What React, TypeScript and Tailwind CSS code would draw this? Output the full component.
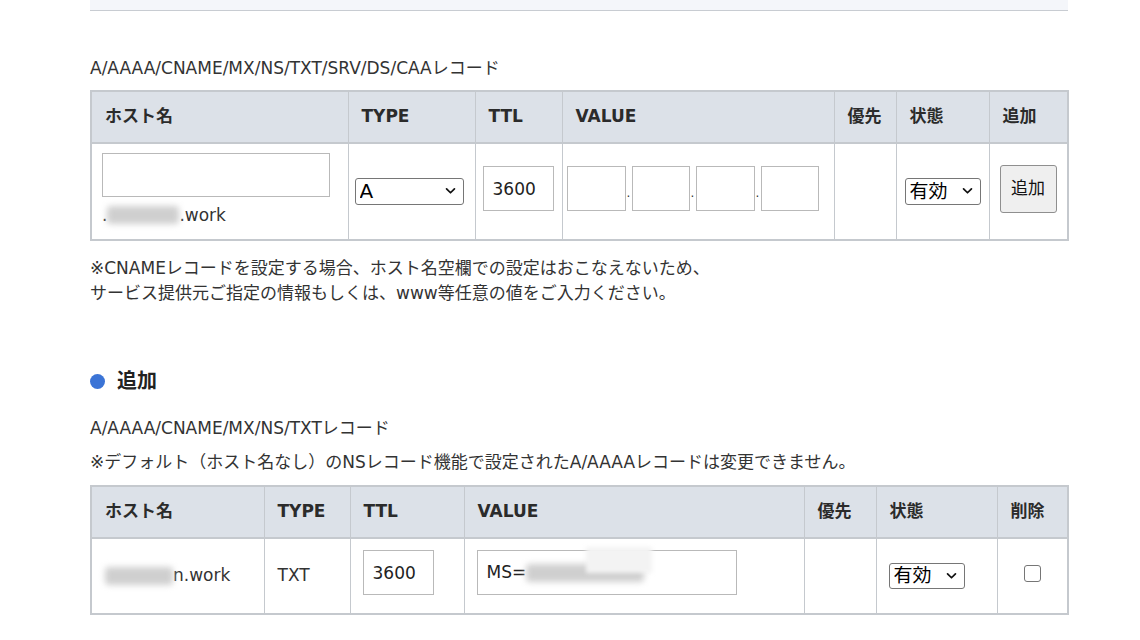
import React from 'react';

const font = "font-['DejaVu_Sans','Noto_Sans_CJK_JP',sans-serif]";

function Chevron({ className = '' }: { className?: string }) {
  return (
    <svg viewBox="0 0 12 8" className={className} fill="none" stroke="#111" strokeWidth="2" strokeLinecap="round" strokeLinejoin="round">
      <path d="M1.5 1.5 6 6l4.5-4.5" />
    </svg>
  );
}

function FakeSelect({ value, className }: { value: string; className: string }) {
  return (
    <div className={`relative inline-flex items-center rounded-[3px] border border-[#767676] bg-white leading-none text-black ${className}`}>
      <select className="h-full w-full appearance-none bg-transparent pl-[4px] outline-none" defaultValue={value}>
        <option>{value}</option>
      </select>
      <Chevron className="pointer-events-none absolute right-[7px] top-1/2 h-[7px] w-[11px] -translate-y-1/2" />
    </div>
  );
}

function Blur({ className }: { className: string }) {
  return <span className={`inline-block rounded-sm bg-[#cfcfcf] blur-[3px] align-middle ${className}`} />;
}

const th = 'border border-[#c5c9ce] border-b-2 px-[13px] text-left align-middle font-bold text-[#2b2b2b]';
const td = 'border border-[#c5c9ce] align-middle';

export default function App() {
  return (
    <div className={`min-h-[640px] w-[1140px] bg-white text-[17px] text-[#333] ${font}`}>
      <div className="ml-[90px] w-[978px]">
        <div className="h-[11px] border-b border-[#c8ccd2] bg-[#f4f6fa]" />

        <p className="mt-[45px] leading-[24px]">A/AAAA/CNAME/MX/NS/TXT/SRV/DS/CAAレコード</p>

        <table className="mt-[10px] w-[977px] table-fixed border-collapse border-2 border-[#c5c9ce]">
          <colgroup>
            <col className="w-[257px]" />
            <col className="w-[127px]" />
            <col className="w-[87px]" />
            <col className="w-[272px]" />
            <col className="w-[62px]" />
            <col className="w-[93px]" />
            <col className="w-[79px]" />
          </colgroup>
          <thead>
            <tr className="h-[52px] bg-[#dce1e8]">
              <th className={th}>ホスト名</th>
              <th className={th}>TYPE</th>
              <th className={th}>TTL</th>
              <th className={th}>VALUE</th>
              <th className={`${th} px-[10px]`}>優先</th>
              <th className={`${th} px-[10px]`}>状態</th>
              <th className={th}>追加</th>
            </tr>
          </thead>
          <tbody>
            <tr className="h-[97px]">
              <td className="border border-[#c5c9ce] px-[10px] pt-[9px] align-top">
                <input className="block h-[44px] w-[228px] border border-[#b9b9b9] bg-white" />
                <div className="mt-[7px] flex items-center leading-[22px]">
                  <span>.</span>
                  <Blur className="h-[18px] w-[72px]" />
                  <span>.work</span>
                </div>
              </td>
              <td className={`${td} pl-[6px]`}>
                <FakeSelect value="A" className="h-[27px] w-[109px] text-[20px]" />
              </td>
              <td className={`${td} pl-[7px]`}>
                <input defaultValue="3600" className="mb-[6px] block h-[45px] w-[71px] border border-[#b9b9b9] bg-white px-[9px] text-[17px] text-[#222]" />
              </td>
              <td className={`${td} pl-[4px]`}>
                <div className="mb-[6px] flex items-center">
                  <input className="h-[45px] w-[59px] border border-[#b9b9b9] bg-white" />
                  <span className="w-[6px] pt-[8px] text-center text-[12px]">.</span>
                  <input className="h-[45px] w-[58px] border border-[#b9b9b9] bg-white" />
                  <span className="w-[6px] pt-[8px] text-center text-[12px]">.</span>
                  <input className="h-[45px] w-[59px] border border-[#b9b9b9] bg-white" />
                  <span className="w-[6px] pt-[8px] text-center text-[12px]">.</span>
                  <input className="h-[45px] w-[58px] border border-[#b9b9b9] bg-white" />
                </div>
              </td>
              <td className={td} />
              <td className={`${td} pl-[8px]`}>
                <FakeSelect value="有効" className="h-[27px] w-[76px] text-[19px]" />
              </td>
              <td className={`${td} pl-[10px]`}>
                <button className="mb-[6px] block h-[48px] w-[57px] rounded-[3px] border border-[#8f8f8f] bg-[#efefef] text-[17px] text-[#111]">追加</button>
              </td>
            </tr>
          </tbody>
        </table>

        <div className="mt-[15px] leading-[25px]">
          <p>※CNAMEレコードを設定する場合、ホスト名空欄での設定はおこなえないため、</p>
          <p>サービス提供元ご指定の情報もしくは、www等任意の値をご入力ください。</p>
        </div>

        <div className="mt-[61px] flex items-center gap-[12px]">
          <span className="h-[15px] w-[15px] rounded-full bg-[#3b74d6]" />
          <h2 className="text-[20px] font-bold leading-[28px] text-[#222]">追加</h2>
        </div>

        <p className="mt-[21px] leading-[24px]">A/AAAA/CNAME/MX/NS/TXTレコード</p>
        <p className="mt-[10px] leading-[24px]">※デフォルト（ホスト名なし）のNSレコード機能で設定されたA/AAAAレコードは変更できません。</p>

        <table className="mt-[11px] w-[977px] table-fixed border-collapse border-2 border-[#c5c9ce]">
          <colgroup>
            <col className="w-[173px]" />
            <col className="w-[86px]" />
            <col className="w-[114px]" />
            <col className="w-[340px]" />
            <col className="w-[72px]" />
            <col className="w-[121px]" />
            <col className="w-[71px]" />
          </colgroup>
          <thead>
            <tr className="h-[52px] bg-[#dce1e8]">
              <th className={th}>ホスト名</th>
              <th className={th}>TYPE</th>
              <th className={th}>TTL</th>
              <th className={th}>VALUE</th>
              <th className={th}>優先</th>
              <th className={th}>状態</th>
              <th className={th}>削除</th>
            </tr>
          </thead>
          <tbody>
            <tr className="h-[76px]">
              <td className={`${td} px-[13px]`}>
                <div className="flex items-center">
                  <Blur className="h-[18px] w-[68px]" />
                  <span>n.work</span>
                </div>
              </td>
              <td className={`${td} px-[13px]`}>TXT</td>
              <td className={`${td} pl-[12px]`}>
                <input defaultValue="3600" className="mb-[7px] block h-[45px] w-[71px] border border-[#b9b9b9] bg-white px-[9px] text-[17px] text-[#222]" />
              </td>
              <td className={`${td} pl-[12px]`}>
                <div className="relative mb-[7px] flex h-[45px] w-[260px] items-center border border-[#b9b9b9] bg-white px-[9px] text-[#222]">
                  <span>MS=</span>
                  <Blur className="h-[18px] w-[118px]" />
                  <span className="absolute left-[108px] top-[-4px] h-[26px] w-[66px] bg-[#f3f3f3] blur-[2px]" />
                </div>
              </td>
              <td className={td} />
              <td className={`${td} pl-[12px]`}>
                <FakeSelect value="有効" className="h-[26px] w-[76px] text-[19px]" />
              </td>
              <td className={`${td} text-center`}>
                <input type="checkbox" className="mb-[5px] h-[17px] w-[17px] appearance-none rounded-[3px] border border-[#767676] bg-white align-middle" />
              </td>
            </tr>
          </tbody>
        </table>
      </div>
    </div>
  );
}
